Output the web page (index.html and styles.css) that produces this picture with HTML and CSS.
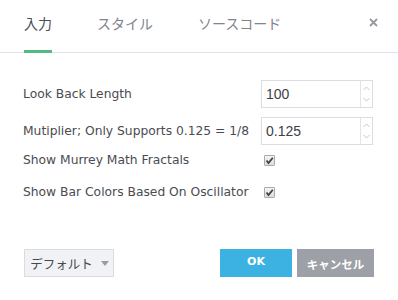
FILE: index.html
```html
<!DOCTYPE html>
<html lang="ja">
<head>
    <meta charset="UTF-8" />
    <meta name="viewport" content="width=device-width, initial-scale=1.0"/>
    <title>入力</title>
    <link rel="stylesheet" href="styles.css">
</head>
<body>
    <div class="dialog">
        <div class="header">
            <div class="tabs">
                <span class="tab active">入力</span>
                <span class="tab">スタイル</span>
                <span class="tab">ソースコード</span>
            </div>
            <svg class="close" width="9" height="9" viewBox="0 0 9 9">
                <path d="M1 1L8 8M8 1L1 8" stroke="#9598a1" stroke-width="1.8"/>
            </svg>
        </div>

        <div class="content">
            <div class="row input-row">
                <label>Look Back Length</label>
                <div class="spin">
                    <input type="text" value="100">
                    <div class="arrows">
                        <svg width="7" height="5" viewBox="0 0 7 5"><path d="M0.5 4L3.5 1L6.5 4" fill="none" stroke="#c4c7cc"/></svg>
                        <svg width="7" height="5" viewBox="0 0 7 5"><path d="M0.5 1L3.5 4L6.5 1" fill="none" stroke="#c4c7cc"/></svg>
                    </div>
                </div>
            </div>
            <div class="row input-row second">
                <label>Mutiplier; Only Supports 0.125 = 1/8</label>
                <div class="spin">
                    <input type="text" value="0.125">
                    <div class="arrows">
                        <svg width="7" height="5" viewBox="0 0 7 5"><path d="M0.5 4L3.5 1L6.5 4" fill="none" stroke="#c4c7cc"/></svg>
                        <svg width="7" height="5" viewBox="0 0 7 5"><path d="M0.5 1L3.5 4L6.5 1" fill="none" stroke="#c4c7cc"/></svg>
                    </div>
                </div>
            </div>
            <div class="row check-row first-check">
                <label>Show Murrey Math Fractals</label>
                <span class="check">
                    <svg width="9" height="9" viewBox="0 0 9 9"><path d="M1.5 4.5L3.5 7L7.8 1.8" fill="none" stroke="#3d3f44" stroke-width="1.8"/></svg>
                </span>
            </div>
            <div class="row check-row">
                <label>Show Bar Colors Based On Oscillator</label>
                <span class="check">
                    <svg width="9" height="9" viewBox="0 0 9 9"><path d="M1.5 4.5L3.5 7L7.8 1.8" fill="none" stroke="#3d3f44" stroke-width="1.8"/></svg>
                </span>
            </div>
        </div>

        <div class="footer">
            <button class="btn-default">デフォルト<span class="caret"></span></button>
            <div class="actions">
                <button class="btn-ok">OK</button>
                <button class="btn-cancel">キャンセル</button>
            </div>
        </div>
    </div>
</body>
</html>
```

FILE: styles.css
```css
body {
    margin: 0;
    background: #fff;
    font-family: "DejaVu Sans", "Noto Sans CJK JP", sans-serif;
}
.dialog {
    width: 398px;
    height: 300px;
    display: flex;
    flex-direction: column;
}
.header {
    height: 52px;
    border-bottom: 1px solid #e0e3e8;
    display: flex;
    align-items: stretch;
    justify-content: space-between;
    padding: 0 20px 0 24px;
}
.tabs {
    display: flex;
    gap: 45px;
}
.tab {
    font-family: "Noto Sans CJK JP", sans-serif;
    font-size: 14px;
    color: #80848c;
    padding-top: 13px;
    line-height: 20px;
    border-bottom: 2px solid transparent;
}
.tab.active {
    color: #4a4e57;
    border-bottom: 3px solid #53b987;
    margin-bottom: -1px;
}
.close {
    margin-top: 18px;
}
.content {
    padding: 27px 25px 0 23px;
}
.row {
    display: flex;
    align-items: center;
}
.row label {
    width: 238px;
    font-size: 12.3px;
    color: #4a4c52;
    white-space: nowrap;
}
.input-row {
    height: 28px;
}
.input-row.second {
    margin-top: 9px;
}
.spin {
    display: flex;
    width: 110px;
    height: 26px;
    border: 1px solid #dadde2;
}
.spin input {
    flex: 1;
    width: 0;
    border: none;
    padding: 0 0 0 4px;
    font-family: "Liberation Sans", Arial, sans-serif;
    font-size: 14px;
    color: #3e4047;
    outline: none;
}
.arrows {
    width: 11px;
    border-left: 1px solid #e2e4e8;
    display: flex;
    flex-direction: column;
    align-items: center;
    justify-content: space-around;
    padding: 2px 0;
}
.arrows svg {
    display: block;
}
.check-row {
    height: 24px;
}
.first-check {
    margin-top: 3px;
}
.check-row + .check-row {
    margin-top: 8px;
}
.check {
    width: 9px;
    height: 9px;
    margin-left: 3px;
    border: 1px solid #a9abaf;
    border-radius: 1px;
    background: linear-gradient(#f4f4f5, #dcdde0);
    display: flex;
    align-items: center;
    justify-content: center;
}
.footer {
    margin-top: auto;
    margin-bottom: 23px;
    padding: 0 24px;
    display: flex;
    justify-content: space-between;
}
button {
    height: 28px;
    border: none;
    cursor: pointer;
    padding: 0;
    white-space: nowrap;
    font-family: "Noto Sans CJK JP", sans-serif;
    font-size: 13px;
}
.btn-default {
    width: 90px;
    background: #f1f2f5;
    border: 1px solid #d9dce1;
    color: #45484f;
    padding: 0 0 0 1px;
    font-size: 12.5px;
    display: flex;
    align-items: center;
    justify-content: center;
    gap: 8px;
}
.caret {
    width: 0;
    height: 0;
    border-left: 4px solid transparent;
    border-right: 4px solid transparent;
    border-top: 5px solid #9a9ca1;
}
.actions {
    display: flex;
    gap: 5px;
}
.btn-ok {
    width: 72px;
    background: #3cb2e3;
    color: #fff;
    font-weight: bold;
    font-family: "DejaVu Sans", sans-serif;
    font-size: 11px;
    padding-bottom: 3px;
}
.btn-cancel {
    width: 77px;
    background: #9da0a6;
    color: #fff;
    font-weight: bold;
    font-size: 11.5px;
    padding-top: 1px;
}
```
